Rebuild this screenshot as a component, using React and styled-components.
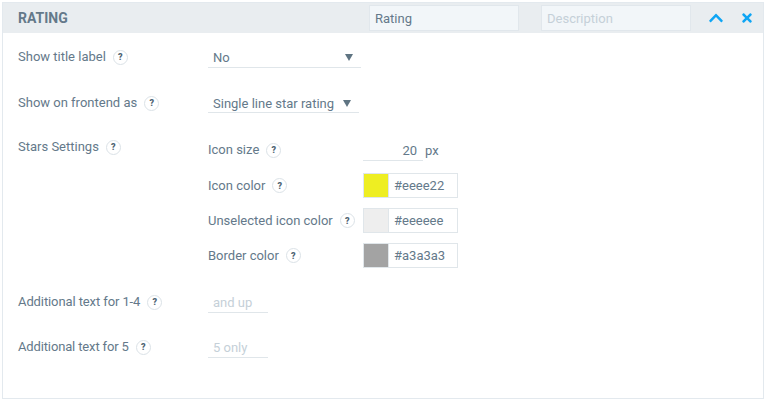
import React from 'react';
import styled, { createGlobalStyle } from 'styled-components';
import { FaChevronUp, FaTimes } from 'react-icons/fa';

const Global = createGlobalStyle`
  html, body { margin: 0; padding: 0; background: #fff; }
  body { font-family: Roboto, "Liberation Sans", sans-serif; font-size: 13px; color: #64798a; }
`;

const Panel = styled.div`
  width: 762px;
  height: 397px;
  margin: 2px 0 0 2px;
  box-sizing: border-box;
  border: 1px solid #e3e9ee;
  display: flex;
  flex-direction: column;
`;

const Header = styled.div`
  height: 30px;
  flex: none;
  background: #e9edf0;
  display: flex;
  align-items: center;
  padding-left: 15px;
`;

const Title = styled.div`
  font-size: 14px;
  font-weight: 700;
  color: #64798a;
  width: 351px;
`;

const HeaderInput = styled.input`
  width: 150px;
  height: 26px;
  box-sizing: border-box;
  margin-right: 22px;
  padding: 0 5px;
  border: 1px solid #e1e7ec;
  background: #f2f6f9;
  font: 13px Roboto, sans-serif;
  color: #64798a;
  outline: none;
  &::placeholder { color: #c5d0d8; opacity: 1; }
`;

const HeaderIcons = styled.div`
  display: flex;
  align-items: center;
  gap: 16px;
  margin-left: -5px;
  color: #0ea5f4;
  font-size: 16px;
  svg + svg { font-size: 14px; }
`;

const Body = styled.div`
  padding-top: 14px;
  padding-left: 15px;
`;

const Row = styled.div`
  display: grid;
  grid-template-columns: 190px 1fr;
  height: ${({ $h }) => $h}px;
`;

const Label = styled.div`
  display: flex;
  align-items: center;
  gap: 7px;
  height: 20px;
  line-height: 20px;
  white-space: nowrap;
  letter-spacing: ${({ $spacing }) => $spacing || 'normal'};
`;

const Help = styled.span`
  width: 13px;
  height: 13px;
  border: 1px solid #dbe2e7;
  border-radius: 50%;
  display: inline-flex;
  align-items: center;
  justify-content: center;
  font-size: 9px;
  font-weight: 900;
  letter-spacing: normal;
  color: #4f6473;
  flex: none;
`;

const Select = styled.div`
  width: ${({ $w }) => $w}px;
  height: ${({ $h }) => $h}px;
  box-sizing: border-box;
  border-bottom: 1px solid #e0e6ea;
  padding: 0 8px 0 5px;
  display: flex;
  align-items: flex-start;
  justify-content: space-between;
  line-height: 21px;
`;

const Arrow = styled.span`
  width: 0;
  height: 0;
  margin-top: 7px;
  border-left: 4px solid transparent;
  border-right: 4px solid transparent;
  border-top: 7px solid #5f7482;
`;

const Stars = styled.div`
  display: flex;
  flex-direction: column;
`;

const SubRow = styled.div`
  display: grid;
  grid-template-columns: 155px auto;
  align-items: center;
  height: 35px;
  box-sizing: border-box;
  &:first-child {
    height: 31px;
    padding-bottom: 5px;
  }
`;

const SizeField = styled.div`
  display: flex;
  align-items: center;
  gap: 2px;
`;

const SizeValue = styled.div`
  width: 60px;
  height: 21px;
  box-sizing: border-box;
  border-bottom: 1px solid #e0e6ea;
  text-align: right;
  padding-right: 6px;
  line-height: 21px;
`;

const Color = styled.div`
  width: 95px;
  height: 25px;
  box-sizing: border-box;
  border: 1px solid #e0e6ea;
  display: flex;
`;

const Swatch = styled.div`
  width: 24px;
  flex: none;
  background: ${({ $c }) => $c};
  border-right: 1px solid #e0e6ea;
`;

const ColorText = styled.div`
  padding-left: 5px;
  line-height: 23px;
`;

const TextField = styled.div`
  width: 60px;
  height: 21px;
  box-sizing: border-box;
  border-bottom: 1px solid #e0e6ea;
  padding-left: 5px;
  line-height: 21px;
  color: #c5d0d8;
`;

const Name = ({ children, spacing }) => (
  <Label $spacing={spacing}>
    {children}
    <Help>?</Help>
  </Label>
);

const ColorRow = ({ label, color }) => (
  <SubRow>
    <Name>{label}</Name>
    <Color>
      <Swatch $c={color} />
      <ColorText>{color}</ColorText>
    </Color>
  </SubRow>
);

export default function App() {
  return (
    <>
      <Global />
      <Panel>
        <Header>
          <Title>RATING</Title>
          <HeaderInput defaultValue="Rating" />
          <HeaderInput placeholder="Description" />
          <HeaderIcons>
            <FaChevronUp />
            <FaTimes />
          </HeaderIcons>
        </Header>
        <Body>
          <Row $h={46}>
            <Name>Show title label</Name>
            <Select $w={153} $h={21}>No<Arrow /></Select>
          </Row>
          <Row $h={44}>
            <Name>Show on frontend as</Name>
            <Select $w={151} $h={20}>Single line star rating<Arrow /></Select>
          </Row>
          <Row $h={155}>
            <Name>Stars Settings</Name>
            <Stars>
              <SubRow>
                <Name>Icon size</Name>
                <SizeField>
                  <SizeValue>20</SizeValue>px
                </SizeField>
              </SubRow>
              <ColorRow label="Icon color" color="#eeee22" />
              <ColorRow label="Unselected icon color" color="#eeeeee" />
              <ColorRow label="Border color" color="#a3a3a3" />
            </Stars>
          </Row>
          <Row $h={45}>
            <Name spacing="-0.1px">Additional text for 1-4</Name>
            <TextField>and up</TextField>
          </Row>
          <Row $h={45}>
            <Name spacing="-0.14px">Additional text for 5</Name>
            <TextField>5 only</TextField>
          </Row>
        </Body>
      </Panel>
    </>
  );
}
